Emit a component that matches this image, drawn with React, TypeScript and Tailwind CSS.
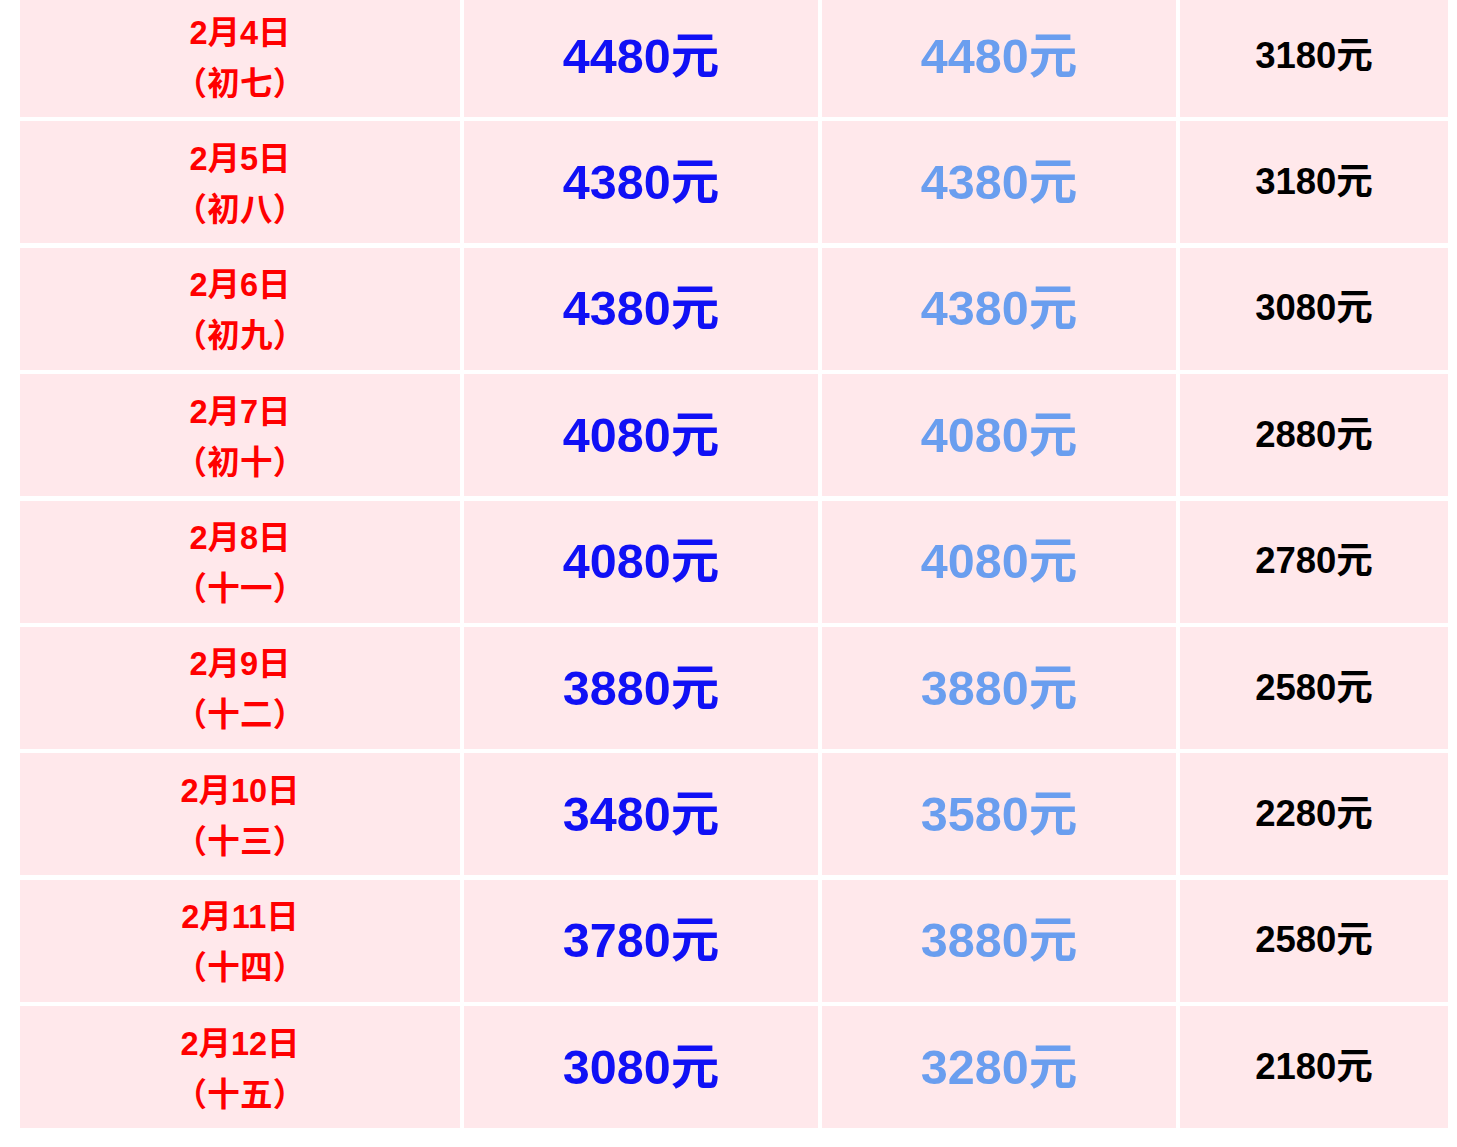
const rows = [
  { date: "2月4日", lunar: "（初七）", a: "4480元", b: "4480元", c: "3180元" },
  { date: "2月5日", lunar: "（初八）", a: "4380元", b: "4380元", c: "3180元" },
  { date: "2月6日", lunar: "（初九）", a: "4380元", b: "4380元", c: "3080元" },
  { date: "2月7日", lunar: "（初十）", a: "4080元", b: "4080元", c: "2880元" },
  { date: "2月8日", lunar: "（十一）", a: "4080元", b: "4080元", c: "2780元" },
  { date: "2月9日", lunar: "（十二）", a: "3880元", b: "3880元", c: "2580元" },
  { date: "2月10日", lunar: "（十三）", a: "3480元", b: "3580元", c: "2280元" },
  { date: "2月11日", lunar: "（十四）", a: "3780元", b: "3880元", c: "2580元" },
  { date: "2月12日", lunar: "（十五）", a: "3080元", b: "3280元", c: "2180元" },
];

const font = "font-['Liberation_Sans','Noto_Sans_CJK_SC',sans-serif] font-bold";

export default function App() {
  return (
    <div className="min-h-[1147px] bg-white pl-[20px] pr-[9px]">
      <div className="-mt-[5px] grid grid-cols-[440px_354px_354px_268px] gap-x-[4px] gap-y-[4.4px]">
        {rows.map((r) => (
          <div key={r.date} className="contents">
            <div className={`${font} flex h-[122px] flex-col items-center justify-center bg-[#ffe8eb] pt-[5px] text-[32.5px] leading-[51px] text-[#ff0000]`}>
              <span>{r.date}</span>
              <span className="tracking-[0.3px]">{r.lunar}</span>
            </div>
            <div className={`${font} flex h-[122px] items-center justify-center bg-[#ffe8eb] text-[48.5px] text-[#1010f5]`}>
              {r.a}
            </div>
            <div className={`${font} flex h-[122px] items-center justify-center bg-[#ffe8eb] text-[48.5px] text-[#6a9eef]`}>
              {r.b}
            </div>
            <div className={`${font} flex h-[122px] items-center justify-center bg-[#ffe8eb] text-[36.5px] text-black`}>
              {r.c}
            </div>
          </div>
        ))}
      </div>
    </div>
  );
}
